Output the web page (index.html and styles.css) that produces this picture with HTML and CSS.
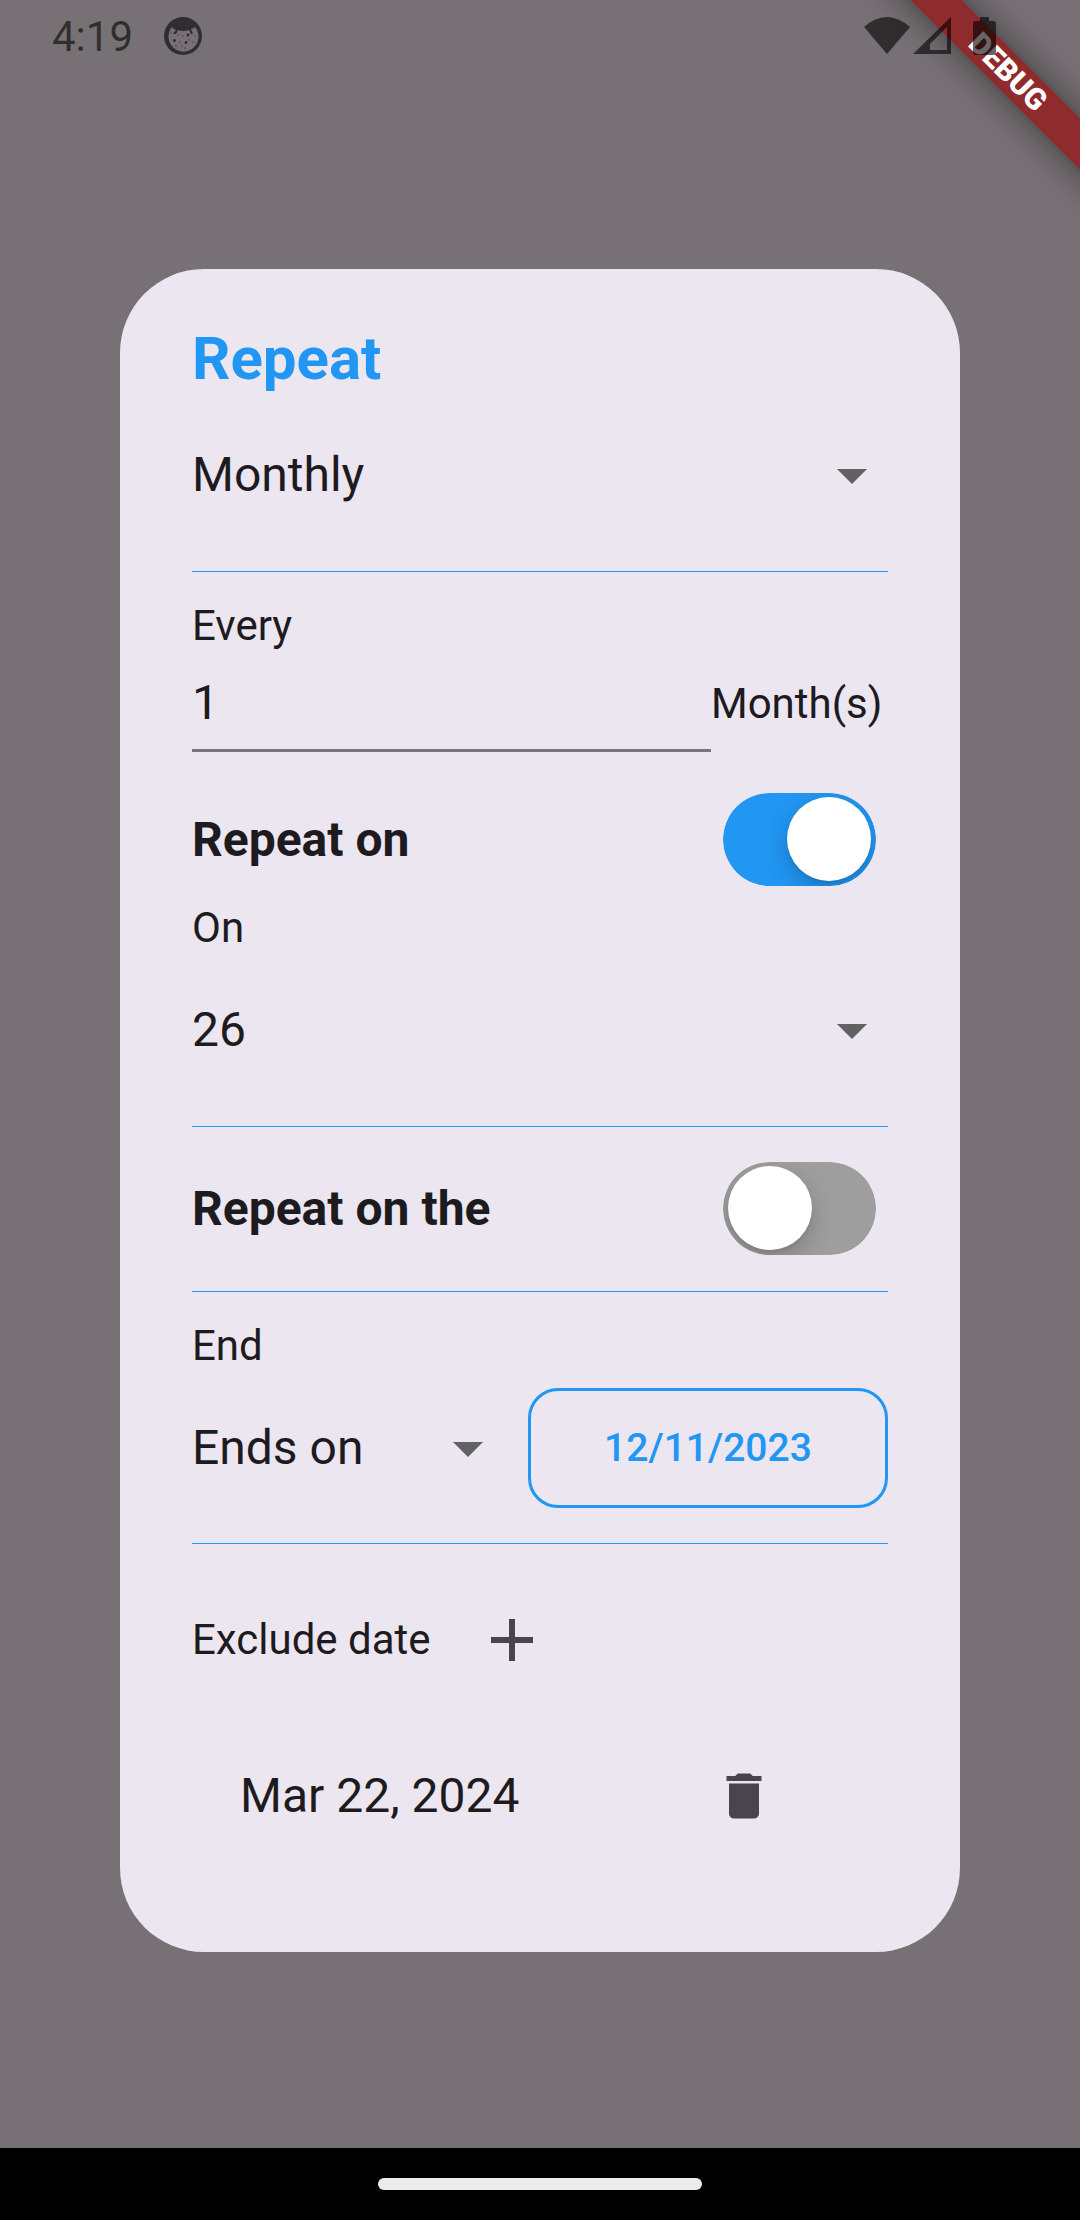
FILE: index.html
```html
<!DOCTYPE html>
<html lang="en">
<head>
<meta charset="utf-8">
<meta name="viewport" content="width=device-width, initial-scale=1">
<title>Repeat</title>
<link rel="stylesheet" href="styles.css">
</head>
<body>
<div class="screen">
  <div class="banner" aria-hidden="true"><span class="banner-ribbon">DEBUG</span></div>

  <header class="status">
    <time class="status-time">4:19</time>
    <svg class="status-face" viewBox="0 0 38 38" aria-hidden="true">
      <path fill-rule="evenodd" d="M19 0a19 19 0 1 0 0 38a19 19 0 1 0 0-38Z M8 10 Q10 13 12 13 L9 17 L12 17 L14 13 Q19 15 25 13 L27 17 L29 17 L27 12 Q29 12 31 10 A15 15 0 1 1 8 10Z" fill="currentColor"/>
      <g fill="currentColor">
        <circle cx="10.500" cy="23.500" r="1.400"/><circle cx="22" cy="25.500" r="1.400"/><circle cx="24" cy="18" r="1.400"/>
        <g opacity=".4"><circle cx="7" cy="16" r="1"/><circle cx="14" cy="18" r="1"/><circle cx="19" cy="19" r="1"/><circle cx="16" cy="25" r="1"/><circle cx="25" cy="23" r="1"/><circle cx="29" cy="25" r="1"/><circle cx="12" cy="29" r="1"/><circle cx="18" cy="29" r="1"/><circle cx="21" cy="31" r="1"/><circle cx="31" cy="19" r="1"/></g>
      </g>
    </svg>
    <div class="status-icons">
      <svg width="46" height="38" viewBox="0 0 46 38" aria-hidden="true"><path d="M0 10 Q23 -10 46 10 L23 37Z" fill="currentColor"/></svg>
      <svg width="38" height="38" viewBox="0 0 38 38" aria-hidden="true"><path fill-rule="evenodd" d="M38 0V37H0Z M34 10 17 27V33H34Z" fill="currentColor"/></svg>
      <svg class="battery" width="23" height="38" viewBox="0 0 23 38" aria-hidden="true"><path d="M7 0H16V4H21Q23 4 23 6V35Q23 38 20 38H3Q0 38 0 35V6Q0 4 2 4H7Z" fill="currentColor"/></svg>
    </div>
  </header>

  <main class="stage">
    <form class="dialog" role="dialog" aria-labelledby="title">
      <h1 class="title" id="title">Repeat</h1>

      <div class="dropdown">
        <select class="dropdown-select" aria-label="Frequency"><option>Monthly</option></select>
        <svg class="dropdown-caret" viewBox="0 0 24 24" aria-hidden="true"><path d="M7 10l5 5 5-5z"/></svg>
      </div>
      <hr class="rule">

      <label class="label" for="every">Every</label>
      <div class="every">
        <input class="every-input" id="every" type="text" inputmode="numeric" value="1">
        <span class="every-unit">Month(s)</span>
      </div>

      <div class="toggle">
        <label class="toggle-label" for="repeat-on">Repeat on</label>
        <input class="switch" id="repeat-on" type="checkbox" role="switch" checked>
      </div>

      <label class="label" for="day">On</label>
      <div class="dropdown">
        <select class="dropdown-select" id="day"><option>26</option></select>
        <svg class="dropdown-caret" viewBox="0 0 24 24" aria-hidden="true"><path d="M7 10l5 5 5-5z"/></svg>
      </div>
      <hr class="rule">

      <div class="toggle">
        <label class="toggle-label" for="repeat-on-the">Repeat on the</label>
        <input class="switch" id="repeat-on-the" type="checkbox" role="switch">
      </div>
      <hr class="rule">

      <label class="label" for="end">End</label>
      <div class="end">
        <div class="dropdown">
          <select class="dropdown-select" id="end"><option>Ends on</option></select>
          <svg class="dropdown-caret" viewBox="0 0 24 24" aria-hidden="true"><path d="M7 10l5 5 5-5z"/></svg>
        </div>
        <button class="date-button" type="button">12/11/2023</button>
      </div>
      <hr class="rule">

      <div class="exclude">
        <span class="exclude-label">Exclude date</span>
        <button class="icon-button" type="button" aria-label="Add excluded date">
          <svg width="72" height="72" viewBox="0 0 24 24" aria-hidden="true"><path d="M19 13h-6v6h-2v-6H5v-2h6V5h2v6h6v2z"/></svg>
        </button>
      </div>
      <div class="excluded">
        <span>Mar 22, 2024</span>
        <button class="icon-button" type="button" aria-label="Delete excluded date">
          <svg width="60" height="60" viewBox="0 0 24 24" aria-hidden="true"><path d="M6 19c0 1.100.9 2 2 2h8c1.100 0 2-.9 2-2V7H6v12zM19 4h-3.500l-1-1h-5l-1 1H5v2h14V4z"/></svg>
        </button>
      </div>
    </form>
  </main>

  <footer class="navbar"><span class="navbar-handle"></span></footer>
</div>
</body>
</html>
```

FILE: styles.css
```css
*, *::before { box-sizing: border-box; }

:root {
  --blue: #2196f3;
  --ink: #1d1b20;
  --icon: #49454f;
  --surface: #ece6f0;
}

body {
  margin: 0;
  background: #777175;
  color: var(--ink);
  font-family: Roboto, "Liberation Sans", sans-serif;
  font-size: 48px;
}

button, input, select {
  margin: 0;
  padding: 0;
  border: 0;
  background: none;
  color: inherit;
  font: inherit;
}

.screen {
  position: relative;
  display: flex;
  flex-direction: column;
  min-height: 100vh;
}

/* Status bar */
.status {
  position: relative;
  display: flex;
  align-items: center;
  height: 72px;
  padding: 0 84px 0 52px;
  color: rgba(0, 0, 0, .6);
}
.status-time { font-size: 42px; line-height: 72px; padding-top: 2px; }
.status-face { width: 38px; height: 38px; margin-left: 31px; }
.status-icons { display: flex; gap: 3px; margin-left: auto; }
.battery { margin-left: 19px; }

/* Corner banner, painted under the status icons */
.banner {
  position: absolute;
  top: 0;
  right: 0;
  width: 240px;
  height: 240px;
  overflow: hidden;
}
.banner-ribbon {
  position: absolute;
  top: 54px;
  right: -88px;
  width: 320px;
  background: #8f2a2d;
  box-shadow: 0 0 36px rgba(0, 0, 0, .5);
  color: #fff;
  font-size: 30px;
  font-weight: 900;
  line-height: 36px;
  text-align: center;
  transform: rotate(45deg);
}

/* Dialog */
.stage {
  display: flex;
  flex: 1;
  align-items: center;
  padding: 0 120px;
}
.dialog {
  flex: 1;
  min-width: 0;
  padding: 54px 72px 72px;
  border-radius: 84px;
  background: var(--surface);
}
.title {
  margin: 0 0 8px;
  color: var(--blue);
  font-size: 60px;
  font-weight: 700;
  line-height: 72px;
}
.rule {
  height: 1px;
  margin: 24px 0;
  border: 0;
  background: var(--blue);
}
.label {
  display: block;
  font-size: 42px;
  line-height: 60px;
}

.dropdown {
  display: grid;
  align-items: center;
  height: 144px;
}
.dropdown-select, .dropdown-caret { grid-area: 1 / 1; }
.dropdown-select {
  width: 100%;
  height: 72px;
  appearance: none;
}
.dropdown-caret {
  justify-self: end;
  width: 72px;
  height: 72px;
  fill: #616161;
  pointer-events: none;
}

.every {
  display: flex;
  align-items: center;
  height: 96px;
  margin-bottom: 30px;
}
.every-input {
  flex: 1;
  min-width: 0;
  height: 96px;
  border-bottom: 3px solid #79747e;
}
.every-unit { width: 177px; font-size: 42px; }

.toggle {
  display: flex;
  align-items: center;
  justify-content: space-between;
  height: 116px;
  padding-right: 12px;
}
.toggle-label { font-weight: 700; }
.switch {
  width: 153px;
  height: 93px;
  padding: 4px 5px;
  border-radius: 47px;
  background: #9e9e9e;
  appearance: none;
  clip-path: inset(0 round 47px);
}
.switch::before {
  content: "";
  display: block;
  width: 84px;
  height: 84px;
  border-radius: 50%;
  background: #fff;
  box-shadow: 0 9px 24px rgba(0, 0, 0, .2), 0 3px 3px rgba(0, 0, 0, .06);
}
.switch:checked { background: var(--blue); }
.switch:checked::before { margin-left: auto; }

.end {
  display: grid;
  grid-template-columns: 13fr 15fr;
  gap: 24px;
  align-items: center;
  height: 143px;
}
.date-button {
  height: 120px;
  border: 3px solid var(--blue);
  border-radius: 30px;
  color: var(--blue);
  font-size: 39px;
  font-weight: 500;
}

.exclude { display: flex; align-items: center; }
.exclude-label { min-width: 248px; font-size: 42px; }
.icon-button {
  display: grid;
  place-items: center;
  width: 144px;
  height: 144px;
}
.icon-button svg { fill: var(--icon); }
.excluded {
  display: flex;
  align-items: center;
  justify-content: space-between;
  height: 168px;
  padding: 0 72px 0 48px;
}

/* System navigation */
.navbar {
  display: grid;
  place-items: center;
  height: 72px;
  background: #000;
}
.navbar-handle {
  width: 30%;
  height: 12px;
  border-radius: 6px;
  background: #ebebeb;
}
```
